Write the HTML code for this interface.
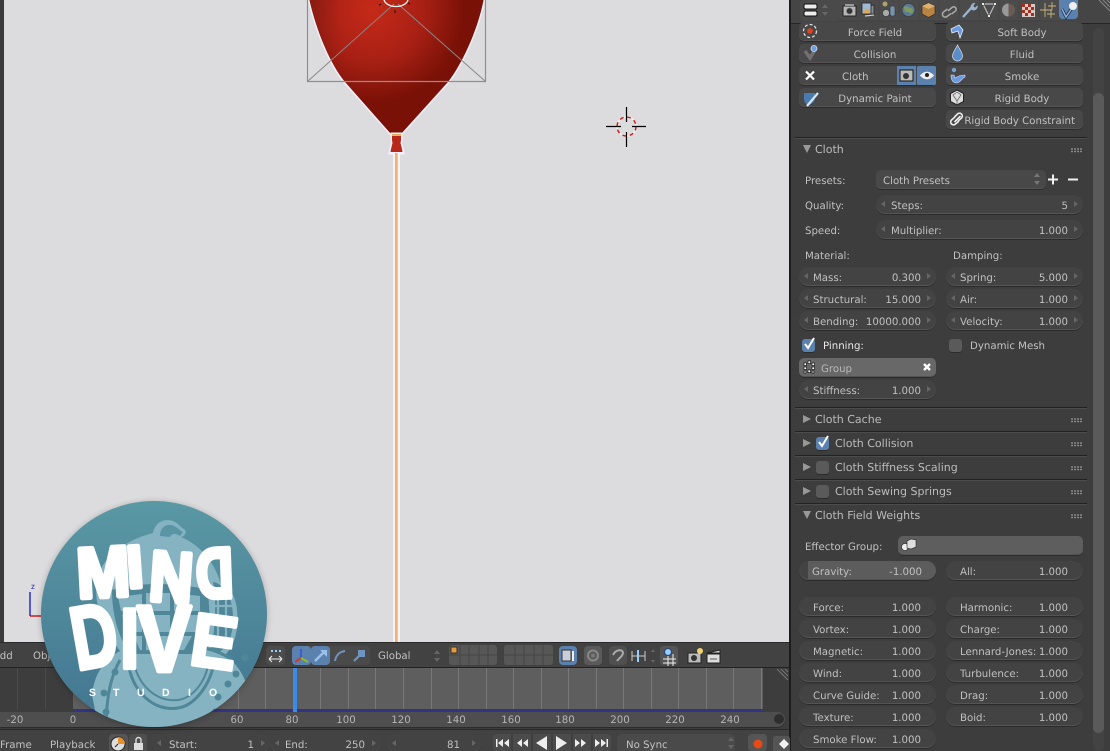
<!DOCTYPE html>
<html><head><meta charset="utf-8"><style>
html,body{margin:0;padding:0;background:#3d3d3d}
#r{position:relative;width:1110px;height:751px;overflow:hidden;background:#3d3d3d;font:10.2px/23px "DejaVu Sans","Liberation Sans",sans-serif;color:#c0c0c0;text-rendering:geometricPrecision}
#r div,#r svg{position:absolute}
.b,.p,.d{height:19px;border-radius:5px;background:#484848;box-shadow:inset 0 -1px 0 #545454,0 1px 0 #2c2c2c;text-align:center;white-space:nowrap}
.b{width:137px;box-sizing:border-box;padding-left:15px}
.p{width:137px;border-radius:10px;background:#434343}
.p i,.d i{position:absolute;font-style:normal}
.p .l{left:14px}.p .v{right:15px}
.p.a:before,.p.a:after{content:"";position:absolute;top:6px;border:3px solid transparent;border-width:3.5px 4px}
.p.a:before{left:1px;border-right-color:#666}
.p.a:after{right:1px;border-left-color:#666}
.t{white-space:nowrap;height:19px}
.h{font-size:11px;line-height:21px;color:#bcbcbc;white-space:nowrap;height:19px}
.ln{left:795px;width:292px;height:1px;background:#222;box-shadow:0 1px 0 #4c4c4c}
.g{left:1071px;width:12px;height:5px;background:radial-gradient(circle at 1px 1px,#999 0.7px,transparent 1px) 0 0/3px 2.500px}
.ck{width:13px;height:13px;border-radius:3px;background:#5a5a5a;box-shadow:0 1px 0 #2c2c2c}
.ck.on{background:#5b82ae}
.tr{width:0;height:0;border-style:solid}
.tr.r{border-width:4px 0 4px 8px;border-color:transparent transparent transparent #999}
.tr.dn{border-width:8px 4px 0 4px;border-color:#999 transparent transparent transparent}
.i{width:19px;height:19px;border-radius:4px;background:#4a4a4a}
.i.on{background:#5b82ae}
.tk{top:668px;width:1px;height:41px;background:#787878}
.n{top:709px;text-align:center;width:40px;color:#b5b5b5}
</style></head><body><div id="r">

<!-- viewport -->
<div style="left:0;top:0;width:4px;height:643px;background:#3a3a3a"></div>
<div style="left:4px;top:0;width:785px;height:643px;background:#dcdcde"></div>
<div style="left:789px;top:0;width:2px;height:751px;background:#1c1c1c"></div>

<svg style="left:0;top:0" width="790" height="645" viewBox="0 0 790 645">
<defs>
<radialGradient id="bal" gradientUnits="userSpaceOnUse" cx="372" cy="10" r="92">
<stop offset="0" stop-color="#c62a18"/><stop offset=".55" stop-color="#a82014"/><stop offset="1" stop-color="#7a1107"/></radialGradient>
<linearGradient id="edge" x1="0" x2="1"><stop offset="0" stop-color="#7a1a10" stop-opacity=".55"/><stop offset=".18" stop-color="#7a1a10" stop-opacity="0"/></linearGradient>
</defs>
<path d="M309 -2C316 30 330 64 345 82L391 134H401L448 82C462 64 478 30 484 -2Z" fill="#f3f0fb" stroke="#f3f0fb" stroke-width="3"/>
<path d="M309 -2C316 30 330 64 345 82L391 134H401L448 82C462 64 478 30 484 -2Z" fill="url(#bal)"/>
<path d="M309 -2C316 30 330 64 345 82L391 134H401L448 82C462 64 478 30 484 -2Z" fill="url(#edge)"/>
<path d="M392 134h9v6l-.500 3l1.500 6l1 4h-13l1-4l1.500-6l-.500-3z" fill="#f3f0fb" stroke="#f3f0fb" stroke-width="3"/>
<path d="M392 136h9v4l-.500 3l1.500 6l.500 3h-12l.500-3l1.500-6l-.500-3z" fill="#b8281a"/>
<rect x="392" y="134" width="9" height="1.800" fill="#e8a860"/>
<rect x="393" y="153" width="7" height="490" fill="#f7f3f3"/>
<rect x="395" y="153" width="2.700" height="490" fill="#f0b07c"/>
<path d="M307.500 -1V81.500H485.500V-1" fill="none" stroke="#8f8f8f" stroke-width="1.200"/>
<path d="M308 81L394 4M485 81L398 4" stroke="#888" stroke-width="1" fill="none"/>
<ellipse cx="396" cy="-1" rx="12" ry="7.500" fill="none" stroke="#f4f4f4" stroke-width="1.300"/>
<path d="M395 10v3M381 4l-2 1M408 3l2 1" stroke="#111" stroke-width="1"/>
<circle cx="626.500" cy="126.500" r="9.500" fill="none" stroke="#f4f4f4" stroke-width="1.400"/>
<circle cx="626.500" cy="126.500" r="9.500" fill="none" stroke="#e01010" stroke-width="1.400" stroke-dasharray="4 3.500"/>
<path d="M606 126.500h15M632 126.500h14M626.500 107v15M626.500 132v15" stroke="#000" stroke-width="1.200"/>
<path d="M30 592V616" stroke="#2020d0" stroke-width="1.400"/><path d="M30 616H41" stroke="#c01010" stroke-width="1.400"/>
<text x="31" y="589" font-family="Liberation Sans" font-size="8" fill="#2020d0">z</text>
</svg>

<!-- 3d toolbar -->
<div style="left:0;top:642px;width:789px;height:26px;background:#424242;border-top:1px solid #2a2a2a;box-sizing:border-box"></div>
<div style="left:0;top:667px;width:789px;height:1px;background:#222"></div>
<div class="t" style="left:-7px;top:645px">Add</div>
<div class="t" style="left:33px;top:645px">Object</div>
<div class="i" style="left:266px;top:646px;background:#4c4c4c"></div>
<svg style="left:266px;top:646px" width="19" height="19"><path d="M3 13h13M3 13l3-3M3 13l3 3M16 13l-3-3M16 13l-3 3" stroke="#eee" fill="none"/><path d="M5 5h2M9 5h2M13 5h2" stroke="#9cf" stroke-width="2"/></svg>

<div style="left:292px;top:646px;width:78px;height:19px;background:#4a4a4a;border-radius:4px"></div>
<div class="i on" style="left:292px;top:646px"></div>
<div class="i on" style="left:311px;top:646px"></div>
<svg style="left:292px;top:646px" width="80" height="19">
<path d="M9 3v9" stroke="#3d5ed0" stroke-width="2"/><path d="M9 12l-6 4" stroke="#d23a2a" stroke-width="2"/><path d="M9 12l7 4" stroke="#8ac020" stroke-width="2"/>
<path d="M23 15L33 5" stroke="#9cc0ea" stroke-width="2.400"/><path d="M28 4h7v7z" fill="#9cc0ea"/>
<path d="M43 15c1-6 4-9 10-10" stroke="#6f94c0" stroke-width="2" fill="none"/>
<path d="M62 15l6-6" stroke="#6f94c0" stroke-width="2.200"/><rect x="66" y="4" width="7" height="7" fill="#6f94c0"/>
</svg>
<div class="t" style="left:378px;top:645px">Global</div>
<svg style="left:433px;top:649px" width="8" height="14"><path d="M4 1l3 4H1zM4 13l3-4H1z" fill="#666"/></svg>

<svg style="left:449px;top:645px" width="280" height="22">
<g fill="#575757">
<rect x="0" y="0" width="48" height="20" rx="3"/><rect x="55" y="0" width="49" height="20" rx="3"/>
</g>
<path d="M11 0v20M20 0v20M30 0v20M39 0v20M0 10h48M66 0v20M75 0v20M85 0v20M94 0v20M55 10h49" stroke="#454545"/>
<rect x="2" y="2" width="6" height="6" fill="#e89a3c" stroke="#333"/>
<rect x="110" y="1" width="18" height="19" rx="4" fill="#5b82ae"/>
<rect x="113" y="5" width="9" height="11" fill="#c8cfd8" stroke="#333"/><path d="M124 6v10" stroke="#eee" stroke-width="2"/>
<rect x="135" y="1" width="18" height="19" rx="4" fill="#5a5a5a"/><circle cx="144" cy="10.500" r="5" fill="none" stroke="#888" stroke-width="2"/><circle cx="144" cy="10.500" r="2" fill="#777"/>
<rect x="160" y="1" width="18" height="19" rx="4" fill="#505050"/>
<path d="M164 10c3-6 10-6 10-2c0 3-4 5-6 8" stroke="#aaa" stroke-width="2" fill="none"/>
<path d="M183 6v10M189 5v12M196 6v10" stroke="#ccc"/><path d="M188 5h2v12h-2z" fill="#9cf"/><path d="M183 11h13" stroke="#ccc"/>
<path d="M202 7l2-3 2 3zM202 15l2 3 2-3z" fill="#666"/>
<rect x="211" y="1" width="18" height="19" rx="3" fill="#555"/>
<path d="M214 14h13M214 18h13M219 9v12M224 9v12" stroke="#eee"/><circle cx="219" cy="7" r="3.500" fill="#9cf" stroke="#247"/>
<rect x="239" y="8" width="13" height="10" fill="#bbb" stroke="#222"/><circle cx="245" cy="13" r="3" fill="#333"/><circle cx="251" cy="6" r="3" fill="#f0d070"/>
<path d="M258 8l13-3v3zM258 9h13v9h-13z" fill="#ddd" stroke="#222"/><path d="M261 14h7" stroke="#555"/>
</svg>

<!-- timeline -->
<div style="left:0;top:668px;width:789px;height:44px;background:#3d3d3d"></div>
<div style="left:73px;top:668px;width:690px;height:41px;background:#5e5e5e"></div>
<div style="left:73px;top:709px;width:690px;height:3px;background:#333383"></div>
<div class="tk" style="left:100px"></div><div class="tk" style="left:128px"></div><div class="tk" style="left:155px"></div><div class="tk" style="left:183px"></div><div class="tk" style="left:210px"></div><div class="tk" style="left:238px"></div><div class="tk" style="left:265px"></div><div class="tk" style="left:320px"></div><div class="tk" style="left:348px"></div><div class="tk" style="left:375px"></div><div class="tk" style="left:403px"></div><div class="tk" style="left:431px"></div><div class="tk" style="left:458px"></div><div class="tk" style="left:486px"></div><div class="tk" style="left:513px"></div><div class="tk" style="left:541px"></div><div class="tk" style="left:568px"></div><div class="tk" style="left:596px"></div><div class="tk" style="left:623px"></div><div class="tk" style="left:651px"></div><div class="tk" style="left:678px"></div><div class="tk" style="left:706px"></div><div class="tk" style="left:733px"></div><div class="tk" style="left:761px"></div>
<div class="tk" style="left:17px;background:#4c4c4c"></div><div class="tk" style="left:45px;background:#4c4c4c"></div>
<div style="left:293px;top:668px;width:4px;height:44px;background:#3a8ae8"></div>
<svg style="left:775px;top:668px" width="14" height="14"><path d="M2 1l11 11M6 1l7 7M10 1l3 3" stroke="#777"/></svg>
<div style="left:0;top:712px;width:785px;height:15px;background:#4e4e4e;border-radius:0 8px 8px 0;box-shadow:0 1px 0 #2c2c2c"></div>
<div style="left:774px;top:714px;width:10px;height:10px;border-radius:5px;background:#2e2e2e"></div>
<div class="n" style="left:-5px">-20</div><div class="n" style="left:53px">0</div><div class="n" style="left:217px">60</div><div class="n" style="left:272px">80</div><div class="n" style="left:326px">100</div><div class="n" style="left:381px">120</div><div class="n" style="left:436px">140</div><div class="n" style="left:491px">160</div><div class="n" style="left:545px">180</div><div class="n" style="left:600px">200</div><div class="n" style="left:655px">220</div><div class="n" style="left:710px">240</div>

<!-- bottom bar -->
<div style="left:0;top:729px;width:789px;height:22px;background:#424242;border-top:1px solid #2a2a2a;box-sizing:border-box"></div>
<div class="t" style="left:0;top:734px">Frame</div>
<div class="t" style="left:50px;top:734px">Playback</div>
<div class="i" style="left:109px;top:734px;background:#555"></div>
<svg style="left:109px;top:734px" width="38" height="19"><circle cx="9" cy="10" r="7" fill="#ddd" stroke="#222"/><path d="M9 10V3a7 7 0 0 1 7 7z" fill="#e8902c"/><path d="M9 10l-3 3" stroke="#222"/><rect x="20" y="0" width="18" height="19" rx="3" fill="#4e4e4e"/><rect x="25" y="9" width="9" height="7" fill="#ddd"/><path d="M27 9V6a2.500 2.500 0 0 1 5 0v3" fill="none" stroke="#ddd" stroke-width="1.400"/></svg>
<div class="p a" style="left:152px;top:734px;width:118px"><i style="left:17px">Start:</i><i style="right:16px">1</i></div>
<div class="p a" style="left:270px;top:734px;width:111px"><i style="left:15px">End:</i><i style="right:16px">250</i></div>
<div class="p a" style="left:387px;top:734px;width:94px"><i style="right:21px">81</i></div>
<div class="p" style="left:617px;top:734px;width:118px;background:#4a4a4a;border-radius:5px"><i style="left:9px">No Sync</i></div>
<svg style="left:727px;top:737px" width="8" height="13"><path d="M4 0l3 4H1zM4 12l3-4H1z" fill="#666"/></svg>
<svg style="left:493px;top:734px" width="119" height="17">
<rect x="0" y="0" width="118" height="17" rx="3" fill="#4b4b4b"/>
<path d="M19 0v17M39 0v17M59 0v17M79 0v17M99 0v17" stroke="#333"/>
<g fill="#eee"><path d="M3 5h1.500v8H3zM10 5v8l-5-4zM16 5v8l-5-4z"/><path d="M29 5v8l-5-4zM35 5v8l-5-4z"/><path d="M54 2v14l-11-7z"/><path d="M63 2v14l11-7z"/><path d="M82 5v8l5-4zM88 5v8l5-4z"/><path d="M102 5v8l5-4zM108 5v8l5-4zM113.500 5h1.500v8h-1.500z"/></g>
</svg>
<div class="i" style="left:748px;top:734px;background:#555;height:17px"></div>
<svg style="left:748px;top:736px" width="42" height="15"><circle cx="10" cy="8" r="4.500" fill="#e84a14"/><rect x="25" y="0" width="17" height="18" rx="3" fill="#555"/><path d="M36 3l5 5-5 5-5-5z" fill="#f2f2f2"/></svg>

<!-- logo -->
<svg style="left:36px;top:496px" width="238" height="238" viewBox="36 496 238 238">
<defs>
<linearGradient id="lg" x1="0" y1="0" x2="0" y2="1"><stop offset="0" stop-color="#5a98a4"/><stop offset="1" stop-color="#427590"/></linearGradient>
<clipPath id="cc"><circle cx="154" cy="614" r="113"/></clipPath>
<filter id="sh" x="-10%" y="-10%" width="120%" height="120%"><feGaussianBlur stdDeviation="3"/></filter>
</defs>
<circle cx="154" cy="615" r="114" fill="#000" opacity=".18" filter="url(#sh)"/>
<circle cx="154" cy="614" r="113" fill="url(#lg)"/>
<g clip-path="url(#cc)">
<path d="M153 533c2-10 10-15 20-12c5 2 8 7 11 8c4 3 0 8-3 8c24 10 36 32 40 48c14 4 18 22 16 42c-1 12-6 22-12 28c12 8 22 24 24 40l-6 40H100l-8-40c2-20 12-36 28-44c-16-20-24-42-24-62c0-28 26-48 57-56z" fill="#86b3c2"/>
<path d="M160 536c0-10 8-13 14-10c3 1 6 5 9 6l-3 4c-5-3-8-3-10 1z" fill="#5a95a6"/>
<path d="M112 590c26-8 66-8 96 0l2 30c0 16-10 28-18 34H130c-10-14-18-36-18-64z" fill="#4f8799"/>
<path d="M118 597l24-3v17h-21zM146 593h24v18h-24zM174 593l26 3v15h-26zM122 615h20v17h-14zM146 615h24v17h-24zM174 615h26l-3 17h-23zM134 636h8v14h-2zM146 636h24v14h-24zM174 636h18l-8 14h-10z" fill="#86b3c2"/>
<path d="M213 582c12 2 20 16 20 36s-6 30-14 34l-8-2c4-20 6-48 2-68z" fill="#4f8799"/>
<path d="M218 590v56M226 596v46M212 606h20M212 624h20" stroke="#86b3c2" stroke-width="2.200"/>
<path d="M120 660c-8 14-14 34-14 70M232 660c-8-6-18-10-28-12M128 662c4 30 26 50 50 46c14-2 30-18 36-44" fill="none" stroke="#4f8799" stroke-width="3"/>
<path d="M134 664c6 24 24 38 44 36c14-2 26-16 30-34" fill="none" stroke="#4f8799" stroke-width="2"/>
<g fill="#4f8799"><circle cx="104" cy="693" r="3.500"/><circle cx="115" cy="672" r="3.500"/><circle cx="106" cy="712" r="3.500"/><circle cx="118" cy="725" r="3"/><circle cx="245" cy="658" r="3.500"/><circle cx="236" cy="674" r="3.500"/><circle cx="228" cy="684" r="3.500"/><circle cx="218" cy="697" r="3.500"/><circle cx="215" cy="712" r="3.500"/></g>
</g>
<g fill="#fff" stroke="#fff" stroke-width="4.500" font-family="Liberation Sans" font-weight="bold" font-size="60" stroke-linejoin="round">
<text transform="translate(78,598) rotate(-3) scale(1.060,1.180)">M</text>
<text transform="translate(128,588) rotate(-4)">I</text>
<text transform="translate(148,600) rotate(4) scale(1.000,1.180)">N</text>
<text transform="translate(234,597) rotate(-2) scale(-.860,1.180)">D</text>
</g>
<g fill="#fff" stroke="#fff" stroke-width="3" font-family="Liberation Sans" font-weight="bold" font-size="60" stroke-linejoin="round">
<text transform="translate(77,670) rotate(-10) scale(1.050,1.480)">D</text>
<text transform="translate(120,668) scale(1.150,1.420)">I</text>
<text transform="translate(137,671) scale(1.360,1.560)">V</text>
<text transform="translate(188,664) rotate(8) scale(1.150,1.250)">E</text>
</g>
<text y="696" font-family="Liberation Sans" font-weight="bold" font-size="10.500" fill="#fff"><tspan x="89">S</tspan><tspan x="113">T</tspan><tspan x="137">U</tspan><tspan x="162">D</tspan><tspan x="188">I</tspan><tspan x="209">O</tspan></text>
</svg>

<!-- properties tabs -->
<div style="left:791px;top:0;width:319px;height:23px;background:#454545;border-bottom:1px solid #262626"></div>
<div style="left:800px;top:0;width:40px;height:21px;border-radius:4px;background:#4a4a4a"></div>
<svg style="left:802px;top:0" width="36" height="20"><rect x="2" y="4" width="13" height="5" rx="1.500" fill="#eee" stroke="#111"/><rect x="2" y="11" width="13" height="5" rx="1.500" fill="#eee" stroke="#111"/><path d="M23 4l3 4h-6zM23 16l3-4h-6z" fill="#666"/></svg>
<div style="left:839px;top:0;width:239px;height:20px;border-radius:0 0 4px 4px;background:#4b4b4b"></div>
<div style="left:1059px;top:0;width:19px;height:19px;background:#5b82ae;border-radius:0 0 4px 4px"></div>
<svg style="left:840px;top:0" width="240" height="21">
<path d="M19 0v19M39 0v19M59 0v19M79 0v19M99 0v19M119 0v19M139 0v19M159 0v19M179 0v19M199 0v19" stroke="#444"/>
<rect x="3" y="6" width="13" height="10" fill="#b8b8b8" stroke="#222"/><rect x="5" y="4" width="9" height="2" fill="#999"/><circle cx="9.500" cy="11" r="3" fill="#333" stroke="#777" stroke-width=".700"/>
<path d="M26 6l8-1v9h-8z" fill="#888" stroke="#222" stroke-width=".700"/><rect x="22" y="3" width="9" height="11" fill="#9db9d6" stroke="#222" stroke-width=".800"/><path d="M24 11l2-3 2 2 2-3v6h-6z" fill="#d8a860"/><path d="M25 16l9-1" stroke="#ccc" stroke-width="1.300"/>
<circle cx="45" cy="4" r="2.500" fill="#d8c878" opacity=".700"/><circle cx="46" cy="13" r="3.500" fill="#aaa" stroke="#333" stroke-width=".600"/><rect x="50" y="6" width="5" height="10" rx="2" fill="#7892ac" stroke="#333" stroke-width=".600"/>
<circle cx="68.500" cy="10" r="6.500" fill="#5a7a98" stroke="#333" stroke-width=".600"/><path d="M64 7c3-2 5 1 7 1s3 3 1 5-3-2-5-1-3-3-3-5z" fill="#7f9a5c"/>
<path d="M82 6l6.500-3 6.500 3v8l-6.500 3.500-6.500-3.500z" fill="#b88444" stroke="#222" stroke-width=".600"/><path d="M82 6l6.500 3 6.500-3-6.500-3z" fill="#e0b070"/>
<g fill="none" stroke="#aaa" stroke-width="1.500"><path d="M107.500 9l-4 3a2.800 2.800 0 0 0 3.500 4.500l4-3"/><path d="M108 11l4-3.500a2.800 2.800 0 0 1 3.500 0M115.500 7.500a2.800 2.800 0 0 1 0 3.500l-4 3"/></g>
<path d="M123 17l9-10" stroke="#9bb4d0" stroke-width="2.400"/><path d="M131 9c-1-3 1-6 4-6l-2 3 2 2 2.500-2.500c.500 3-2.500 6-6 4z" fill="#9bb4d0" stroke="#9bb4d0" stroke-width=".500"/>
<path d="M143 4h12l-6 12z" fill="none" stroke="#bbb" stroke-width="1.200"/><g fill="#eee" stroke="#222" stroke-width=".500"><circle cx="143" cy="4" r="1.500"/><circle cx="155" cy="4" r="1.500"/><circle cx="149" cy="16" r="1.500"/></g>
<circle cx="168.500" cy="10" r="6.500" fill="#6a5a54"/><path d="M168.500 3.500a6.500 6.500 0 0 0 0 13z" fill="#999"/>
<rect x="182" y="4" width="13" height="13" fill="#d8c8c8"/><path d="M182 4h3v3h-3zM188 4h3v3h-3zM185 7h3v3h-3zM191 7h3v3h-3zM182 10h3v3h-3zM188 10h3v3h-3zM185 13h3v3h-3zM191 13h3v3h-3z" fill="#a03020"/>
<path d="M205 3v14M200 10h12M212 2v8M208 6h8M211 10v8M207 14h8" stroke="#c8b478" stroke-width=".900"/>
<path d="M222 9l4 8 6-9" stroke="#1e2e44" stroke-width="3" fill="none"/><path d="M222 9l4 8 6-9" stroke="#8cb0dc" stroke-width="1.500" fill="none"/><circle cx="233" cy="6" r="4" fill="#eee"/>
</svg>
<svg style="left:1097px;top:0" width="13" height="13"><path d="M2 0l11 11M6 0l7 7M10 0l3 3" stroke="#888"/></svg>

<!-- scrollbar -->
<div style="left:1093px;top:28px;width:11px;height:723px;border-radius:6px;background:#434343"></div>
<div style="left:1093px;top:93px;width:11px;height:640px;border-radius:6px;background:#5a5a5a"></div>

<!-- buttons -->
<div class="b" style="left:799px;top:22px">Force Field</div>
<div class="b" style="left:799px;top:44px">Collision</div>
<div class="b" style="left:799px;top:66px;padding:0"><span style="position:absolute;left:43px">Cloth</span></div>
<div class="b" style="left:799px;top:88px">Dynamic Paint</div>
<div class="b" style="left:946px;top:22px">Soft Body</div>
<div class="b" style="left:946px;top:44px">Fluid</div>
<div class="b" style="left:946px;top:66px">Smoke</div>
<div class="b" style="left:946px;top:88px">Rigid Body</div>
<div class="b" style="left:946px;top:110px;padding:0"><span style="position:absolute;right:8px">Rigid Body Constraint</span></div>
<svg style="left:799px;top:22px" width="285" height="108">
<circle cx="11" cy="9" r="6.500" fill="none" stroke="#ddd" stroke-width="1.300" stroke-dasharray="3 2"/><circle cx="11" cy="9" r="2.800" fill="#e8401c"/>
<path d="M6 29l5 7 5-8" stroke="#707070" stroke-width="3.500" fill="none"/><circle cx="15" cy="26.500" r="3" fill="#6aa0e0" stroke="#dde" stroke-width=".800"/>
<path d="M7 49.500l8 8M15 49.500l-8 8" stroke="#fff" stroke-width="2.200"/>
<rect x="98" y="44" width="19" height="19" fill="#5b82ae"/><rect x="118" y="44" width="19" height="19" rx="2" fill="#5b82ae"/>
<rect x="101" y="48" width="13" height="11" fill="#bbb" stroke="#111"/><circle cx="107" cy="54" r="3" fill="#333"/>
<path d="M121 53.500c4-5 10-5 14 0c-4 5-10 5-14 0z" fill="#eee"/><circle cx="128" cy="53" r="2" fill="#222"/>
<path d="M5 71h11v6c-1 4-5 6-7 6c-2-1-4-3-4-6z" fill="#4a7ab0"/><path d="M8 84l11-13" stroke="#d8e8f8" stroke-width="2.200"/>
<path d="M152 7l8-4 4 5-3 8-2-7-6 2z" fill="#6a9ae0" stroke="#e8eef8" stroke-width=".800"/>
<path d="M158.500 23c3 6 5 8 5 11a5 5 0 0 1-10 0c0-3 2-5 5-11z" fill="#5a8ec8" stroke="#dde" stroke-width=".700"/>
<circle cx="155" cy="48" r="2.200" fill="#7aa0d0"/><path d="M152 53c0 5 2 8 6 8c4-1 5-5 8-6v-2c-4 0-7 1-10 3l-1-3z" fill="#6a9ae0" stroke="#dde" stroke-width=".600"/>
<path d="M158 68l6.500 3.500v8l-6.500 3.500-6.500-3.500v-8z" fill="#ddd" stroke="#222"/><path d="M154 73l4-3 4 3-4 6zM158 79v4" fill="none" stroke="#555" stroke-width=".700"/>
<g fill="none" stroke="#eee" stroke-width="1.600"><path d="M156 95l-3.500 3a2.800 2.800 0 0 0 4 4l3.500-3"/><path d="M159 99l3.500-3a2.800 2.800 0 0 0-4-4l-3 3"/><path d="M155.500 100l6-6"/></g>
</svg>

<!-- cloth -->
<div class="ln" style="top:137px"></div>
<div class="tr dn" style="left:803px;top:145px"></div>
<div class="h" style="left:815px;top:139px">Cloth</div>
<div class="g" style="top:148px"></div>

<div class="t" style="left:805px;top:170px">Presets:</div>
<div class="d" style="left:876px;top:170px;width:170px"><i style="left:7px">Cloth Presets</i></div>
<svg style="left:1033px;top:173px" width="8" height="13"><path d="M4 0l3 4H1zM4 12l3-4H1z" fill="#777"/></svg>
<svg style="left:1046px;top:172px" width="36" height="15"><path d="M2 7.500h10M7 2.500v10" stroke="#f0f0f0" stroke-width="2"/><path d="M22 7.500h10" stroke="#f0f0f0" stroke-width="2"/></svg>

<div class="t" style="left:805px;top:195px">Quality:</div>
<div class="p a" style="left:876px;top:195px;width:207px"><i style="left:15px">Steps:</i><i style="right:15px">5</i></div>
<div class="t" style="left:805px;top:220px">Speed:</div>
<div class="p a" style="left:876px;top:220px;width:207px"><i style="left:15px">Multiplier:</i><i style="right:15px">1.000</i></div>

<div class="t" style="left:805px;top:245px">Material:</div>
<div class="t" style="left:953px;top:245px">Damping:</div>

<div class="p a" style="left:799px;top:267px"><i class="l">Mass:</i><i class="v">0.300</i></div>
<div class="p a" style="left:799px;top:289px"><i class="l">Structural:</i><i class="v">15.000</i></div>
<div class="p a" style="left:799px;top:311px"><i class="l">Bending:</i><i class="v">10000.000</i></div>
<div class="p a" style="left:946px;top:267px"><i class="l">Spring:</i><i class="v">5.000</i></div>
<div class="p a" style="left:946px;top:289px"><i class="l">Air:</i><i class="v">1.000</i></div>
<div class="p a" style="left:946px;top:311px"><i class="l">Velocity:</i><i class="v">1.000</i></div>

<div class="ck on" style="left:802px;top:339px"></div>
<svg style="left:802px;top:336px" width="15" height="15"><path d="M3 8l3 4 6-10" stroke="#fff" stroke-width="2" fill="none"/></svg>
<div class="t" style="left:823px;top:335px;color:#e8e8e8">Pinning:</div>
<div class="ck" style="left:949px;top:339px"></div>
<div class="t" style="left:970px;top:335px">Dynamic Mesh</div>

<div class="d" style="left:799px;top:358px;width:137px;background:#686868"><i style="left:22px;color:#b8b8b8">Group</i></div>
<svg style="left:802px;top:360px" width="130" height="15"><g fill="#fff" stroke="#000" stroke-width=".600"><rect x="2" y="3" width="2.500" height="2.500"/><rect x="6" y="1" width="2.500" height="2.500"/><rect x="10" y="3" width="2.500" height="2.500"/><rect x="2" y="7" width="2.500" height="2.500"/><rect x="10" y="7" width="2.500" height="2.500"/><rect x="6" y="10" width="2.500" height="2.500"/><rect x="2" y="11" width="2" height="2"/><rect x="10" y="11" width="2" height="2"/></g><path d="M122 4l6 6M128 4l-6 6" stroke="#fff" stroke-width="2.400"/></svg>
<div class="p a" style="left:799px;top:380px"><i class="l">Stiffness:</i><i class="v">1.000</i></div>

<div class="ln" style="top:407px"></div>
<div class="tr r" style="left:803px;top:415px"></div>
<div class="h" style="left:815px;top:409px">Cloth Cache</div><div class="g" style="top:418px"></div>
<div class="ln" style="top:431px"></div>
<div class="tr r" style="left:803px;top:439px"></div>
<div class="ck on" style="left:816px;top:437px"></div>
<svg style="left:816px;top:434px" width="15" height="15"><path d="M3 8l3 4 6-10" stroke="#fff" stroke-width="2" fill="none"/></svg>
<div class="h" style="left:835px;top:433px">Cloth Collision</div><div class="g" style="top:442px"></div>
<div class="ln" style="top:455px"></div>
<div class="tr r" style="left:803px;top:463px"></div>
<div class="ck" style="left:816px;top:461px"></div>
<div class="h" style="left:835px;top:457px">Cloth Stiffness Scaling</div><div class="g" style="top:466px"></div>
<div class="ln" style="top:479px"></div>
<div class="tr r" style="left:803px;top:487px"></div>
<div class="ck" style="left:816px;top:485px"></div>
<div class="h" style="left:835px;top:481px">Cloth Sewing Springs</div><div class="g" style="top:490px"></div>
<div class="ln" style="top:503px"></div>
<div class="tr dn" style="left:803px;top:511px"></div>
<div class="h" style="left:815px;top:505px">Cloth Field Weights</div><div class="g" style="top:514px"></div>

<div class="t" style="left:805px;top:536px">Effector Group:</div>
<div class="d" style="left:898px;top:536px;width:185px;background:#5e5e5e"></div>
<svg style="left:900px;top:537px" width="18" height="17"><circle cx="5" cy="10" r="3.500" fill="#eee" stroke="#222" stroke-width=".600"/><path d="M7 4l4-2 5 1v7l-5 2-4-1z" fill="#ddd" stroke="#222" stroke-width=".600"/></svg>

<div class="p" style="left:799px;top:561px"></div>
<div class="p" style="left:808px;top:561px;width:128px;background:#5c5c5c;border-radius:0 10px 10px 0"><i style="left:4px">Gravity:</i><i style="right:14px">-1.000</i></div>
<div class="p" style="left:946px;top:561px"><i class="l">All:</i><i class="v">1.000</i></div>

<div class="p" style="left:799px;top:597px"><i class="l">Force:</i><i class="v">1.000</i></div>
<div class="p" style="left:799px;top:619px"><i class="l">Vortex:</i><i class="v">1.000</i></div>
<div class="p" style="left:799px;top:641px"><i class="l">Magnetic:</i><i class="v">1.000</i></div>
<div class="p" style="left:799px;top:663px"><i class="l">Wind:</i><i class="v">1.000</i></div>
<div class="p" style="left:799px;top:685px"><i class="l">Curve Guide:</i><i class="v">1.000</i></div>
<div class="p" style="left:799px;top:707px"><i class="l">Texture:</i><i class="v">1.000</i></div>
<div class="p" style="left:799px;top:729px"><i class="l">Smoke Flow:</i><i class="v">1.000</i></div>
<div class="p" style="left:946px;top:597px"><i class="l">Harmonic:</i><i class="v">1.000</i></div>
<div class="p" style="left:946px;top:619px"><i class="l">Charge:</i><i class="v">1.000</i></div>
<div class="p" style="left:946px;top:641px"><i class="l">Lennard-Jones:</i><i class="v">1.000</i></div>
<div class="p" style="left:946px;top:663px"><i class="l">Turbulence:</i><i class="v">1.000</i></div>
<div class="p" style="left:946px;top:685px"><i class="l">Drag:</i><i class="v">1.000</i></div>
<div class="p" style="left:946px;top:707px"><i class="l">Boid:</i><i class="v">1.000</i></div>

</div></body></html>
